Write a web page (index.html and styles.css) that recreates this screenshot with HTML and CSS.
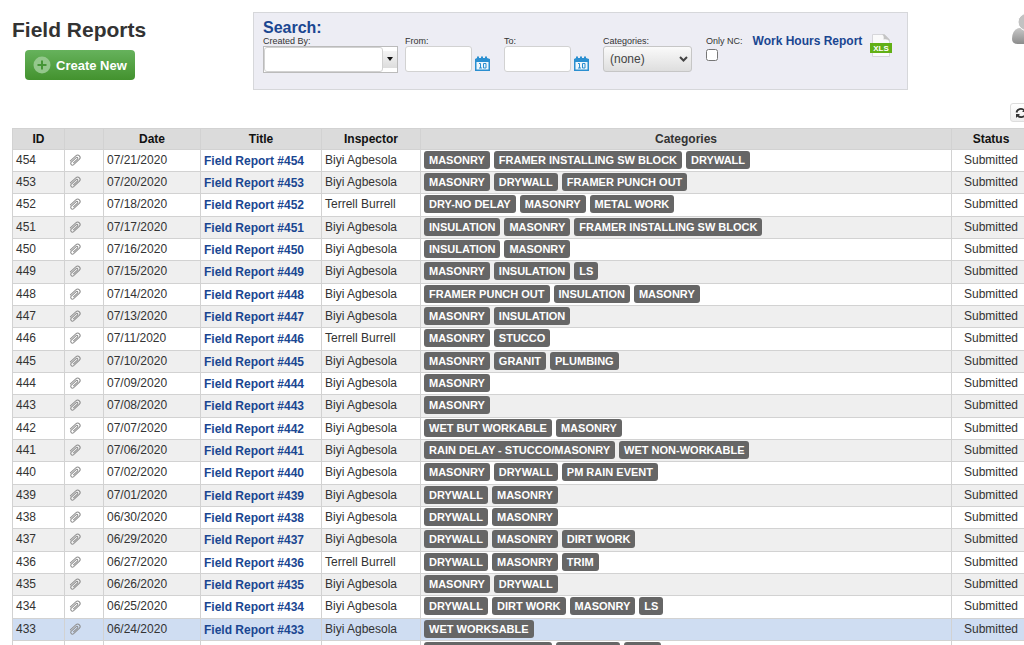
FILE: index.html
```html
<!DOCTYPE html>
<html lang="en">
<head>
  <meta charset="UTF-8" />
  <meta name="viewport" content="width=device-width, initial-scale=1" />
  <title>Field Reports</title>
  <link rel="stylesheet" href="styles.css">
</head>
<body>

  <!-- shared icons -->
  <svg class="sprite" aria-hidden="true">
    <symbol id="clip" viewBox="0 0 14 14">
      <g transform="rotate(-43 7 7)" fill="none" stroke-linecap="round">
        <path d="M3 4.500h7.500a2.500 2.500 0 0 1 0 5H2.500a1.800 1.800 0 0 1 0-3.500H9.500a1 1 0 0 1 0 2H4" stroke="#8c8c8c" />
        <path d="M3 5.200h7" stroke="#c9c9c9" stroke-width=".6" />
      </g>
    </symbol>
    <symbol id="calendar" viewBox="0 0 15 15">
      <path d="M0 3l2-1V1l1-1 1 1v1h2V1l1-1 1 1v1h2V1l1-1 1 1v1l3 1v12H0z" fill="#2b8fd0" />
      <path d="M1.500 6h12v7.500h-12z" fill="#eef6fc" />
      <path d="M4 7.500h1.500v4.500M4 12h3M8.500 7.500h2.500v4.500H8.500z" fill="none" stroke="#2b8fd0" />
    </symbol>
  </svg>

  <div class="page">
    <header class="top">
      <div class="heading">
        <h1>Field Reports</h1>
        <button type="button" class="create">
          <svg width="18" height="18" viewBox="0 0 18 18" aria-hidden="true">
            <circle cx="9" cy="9" r="8.500" fill="#94c78c" />
            <path d="M9 4.500v9M4.500 9h9" stroke="#459536" stroke-width="2" />
          </svg>
          Create New
        </button>
      </div>

      <form class="search">
        <h2>Search:</h2>
        <div class="fields">
          <div class="field">
            <label for="createdBy">Created By:</label>
            <div class="combo">
              <input type="text" id="createdBy" />
              <button type="button" aria-label="Show users">
                <svg width="8" height="5" viewBox="0 0 8 5"><path d="M1 0h6L4 4z" fill="#111" /></svg>
              </button>
            </div>
          </div>
          <div class="field">
            <label for="from">From:</label>
            <div class="date">
              <input type="text" id="from" />
              <button type="button" aria-label="Pick from date"><svg width="15" height="15"><use href="#calendar" /></svg></button>
            </div>
          </div>
          <div class="field">
            <label for="to">To:</label>
            <div class="date">
              <input type="text" id="to" />
              <button type="button" aria-label="Pick to date"><svg width="15" height="15"><use href="#calendar" /></svg></button>
            </div>
          </div>
          <div class="field">
            <label for="categories">Categories:</label>
            <div class="select">
              <select id="categories"><option>(none)</option></select>
              <svg width="9" height="6" viewBox="0 0 9 6" aria-hidden="true"><path d="M1 1l3.500 3.500L8 1" fill="none" stroke="#444" stroke-width="2" /></svg>
            </div>
          </div>
          <div class="field">
            <label for="onlyNc">Only NC:</label>
            <input type="checkbox" id="onlyNc" />
          </div>
          <a href="#" class="hours">Work Hours Report</a>
          <a href="#" class="xls" aria-label="Export to XLS">
            <svg width="22" height="23" viewBox="0 0 22 23">
              <path d="M2.500.5h12l5 5v17h-17z" fill="#fafafa" stroke="#d6d6da" />
              <path d="M12 .5h2.500l5 5V8c-1-3-4-3-6-2.500.5-2 .5-4-1.500-5z" fill="#c4c4c4" />
              <path d="M0 9h22v10H0z" fill="#62b015" />
              <text x="11" y="17" text-anchor="middle">XLS</text>
            </svg>
          </a>
        </div>
      </form>

      <a href="#" class="user" aria-label="Account">
        <svg width="32" height="36" viewBox="0 0 32 36">
          <defs>
            <linearGradient id="gray" x1="0" y1="0" x2="0" y2="1">
              <stop offset="0" stop-color="#c8c8c8" />
              <stop offset="1" stop-color="#8c8c8c" />
            </linearGradient>
          </defs>
          <path d="M7 15h18q7 3 7 10 0 6-6 6H6q-6 0-6-5 0-9 7-11z" fill="url(#gray)" />
          <ellipse cx="16" cy="9" rx="10" ry="9" fill="#c2c2c2" stroke="#fff" />
        </svg>
      </a>
    </header>

    <div class="tools">
      <button type="button" aria-label="Refresh">
        <svg width="12" height="12" viewBox="0 0 12 12">
          <path d="M1.500 5.500C2 2 6.500.5 9.500 3.500M10.500 6.500c-.5 3.500-5 5-8 2" fill="none" stroke="#333" stroke-width="1.800" />
          <path d="M11 1v4H7zM1 11V7h4z" fill="#333" />
        </svg>
      </button>
    </div>

    <table class="reports">
      <colgroup>
        <col class="c-id"><col class="c-clip"><col class="c-date"><col class="c-title">
        <col class="c-inspector"><col><col class="c-status">
      </colgroup>
      <thead>
        <tr><th>ID</th><th></th><th>Date</th><th>Title</th><th>Inspector</th><th class="cats">Categories</th><th>Status</th></tr>
      </thead>
      <tbody id="rows"></tbody>
    </table>
  </div>

  <script src="reports.js"></script>
</body>
</html>
```
FILE: styles.css
```css
body {
  margin: 0;
  overflow: hidden;
  background: #fff;
  color: #333;
  font-family: "Liberation Sans", Arial, sans-serif;
  font-size: 12px;
}
/* the list is slightly wider than the window */
.page {
  box-sizing: border-box;
  width: calc(100% + 19px);
  padding: 12px 12px 0;
}
.sprite {
  display: none;
}
h1, h2 {
  margin: 0;
}
svg {
  display: block;
}
button {
  font-family: inherit;
  padding: 0;
  border: none;
  cursor: pointer;
}
a {
  color: #1a4691;
  font-weight: bold;
  text-decoration: none;
}
.top {
  display: flex;
  align-items: flex-start;
}
.heading {
  width: 241px;
}
h1 {
  padding-top: 6px;
  font-size: 21px;
  line-height: 24px;
}
.create {
  display: flex;
  align-items: center;
  gap: 5px;
  height: 30px;
  margin: 8px 0 0 13px;
  padding: 0 8px;
  border-radius: 4px;
  background: linear-gradient(#66b25c, #43922e);
  color: #fff;
  font-size: 13px;
  font-weight: bold;
}
.search {
  box-sizing: border-box;
  height: 78px;
  padding: 6px 15px 0 9px;
  border: 1px solid #d6d7da;
  background: #ededf4;
}
h2 {
  color: #1a4691;
  font-size: 16px;
  line-height: 18px;
}
.fields {
  display: flex;
  align-items: flex-start;
}
.field {
  margin-right: 7px;
}
.field label {
  display: block;
  font-size: 9px;
  line-height: 9px;
}
.search input[type="text"] {
  box-sizing: border-box;
  height: 26px;
  border: 1px solid #d2d2d2;
  border-radius: 3px;
  background: #fff;
}
.combo {
  display: flex;
  align-items: center;
  box-sizing: border-box;
  width: 135px;
  height: 27px;
  border: 1px solid #bbb;
  background: #fff;
}
.combo input[type="text"] {
  flex: 1;
  min-width: 0;
  height: 25px;
}
.combo button {
  display: flex;
  align-items: center;
  justify-content: center;
  width: 14px;
  height: 17px;
  background: linear-gradient(#f4f4f4, #ddd);
}
.date {
  display: flex;
  align-items: flex-end;
  gap: 3px;
  margin-right: 7px;
}
.date input {
  width: 67px;
}
.date button {
  padding-bottom: 1px;
  background: none;
}
.select {
  position: relative;
  margin-right: 7px;
}
.select select {
  appearance: none;
  width: 89px;
  height: 26px;
  padding: 0 6px;
  border: 1px solid #c6c6c6;
  border-radius: 3px;
  background: linear-gradient(#fafafa, #dedede);
  color: #444;
  font-family: inherit;
  font-size: 12px;
}
.select svg {
  position: absolute;
  top: 10px;
  right: 4px;
  pointer-events: none;
}
.field input[type="checkbox"] {
  display: block;
  width: 12px;
  height: 12px;
  margin: 3px 0 0;
}
.hours {
  margin: 0 8px 0 3px;
  line-height: 8px;
}
.xls {
  margin-top: -3px;
}
.xls text {
  fill: #fff;
  font-size: 8px;
  font-weight: bold;
}
.user {
  margin: 1px -13px 0 auto;
}
.tools {
  display: flex;
  justify-content: flex-end;
  padding: 13px 0 6px;
}
.tools button {
  display: flex;
  align-items: center;
  justify-content: center;
  width: 21px;
  height: 19px;
  border: 1px solid #ddd;
  border-radius: 3px;
  background: linear-gradient(#fff, #eee);
}
.reports {
  width: 100%;
  border-collapse: collapse;
  table-layout: fixed;
}
.c-id { width: 52px; }
.c-clip { width: 39px; }
.c-date { width: 97px; }
.c-title { width: 121px; }
.c-inspector { width: 99px; }
.c-status { width: 79px; }
th, td {
  box-sizing: border-box;
  height: 22px;
  padding: 0 3px;
  border: 1px solid #d2d2d2;
  line-height: 14px;
  white-space: nowrap;
}
th {
  height: 21px;
  background: #dbdbdb;
  color: #111;
}
th.cats {
  color: #333;
}
td {
  padding-bottom: 2px;
}
tbody tr:nth-child(3n) td {
  height: 23px;
}
tbody tr:nth-child(even) {
  background: #efefef;
}
tbody tr.active {
  background: #cfddf2;
}
td:last-child {
  text-align: center;
}
td a {
  display: block;
  padding-top: 2px;
  line-height: 14px;
}
.tags {
  display: flex;
  gap: 4px;
}
.tag {
  padding: 0 5px;
  border-radius: 3px;
  background: #666;
  color: #fff;
  font-size: 11px;
  font-weight: bold;
  line-height: 18px;
}
```
FILE: reports.js
```js
const T = 'Terrell Burrell';
const B = 'Biyi Agbesola';

const reports = [
  [454, '07/21/2020', B, ['MASONRY', 'FRAMER INSTALLING SW BLOCK', 'DRYWALL']],
  [453, '07/20/2020', B, ['MASONRY', 'DRYWALL', 'FRAMER PUNCH OUT']],
  [452, '07/18/2020', T, ['DRY-NO DELAY', 'MASONRY', 'METAL WORK']],
  [451, '07/17/2020', B, ['INSULATION', 'MASONRY', 'FRAMER INSTALLING SW BLOCK']],
  [450, '07/16/2020', B, ['INSULATION', 'MASONRY']],
  [449, '07/15/2020', B, ['MASONRY', 'INSULATION', 'LS']],
  [448, '07/14/2020', B, ['FRAMER PUNCH OUT', 'INSULATION', 'MASONRY']],
  [447, '07/13/2020', B, ['MASONRY', 'INSULATION']],
  [446, '07/11/2020', T, ['MASONRY', 'STUCCO']],
  [445, '07/10/2020', B, ['MASONRY', 'GRANIT', 'PLUMBING']],
  [444, '07/09/2020', B, ['MASONRY']],
  [443, '07/08/2020', B, ['MASONRY']],
  [442, '07/07/2020', B, ['WET BUT WORKABLE', 'MASONRY']],
  [441, '07/06/2020', B, ['RAIN DELAY - STUCCO/MASONRY', 'WET NON-WORKABLE']],
  [440, '07/02/2020', B, ['MASONRY', 'DRYWALL', 'PM RAIN EVENT']],
  [439, '07/01/2020', B, ['DRYWALL', 'MASONRY']],
  [438, '06/30/2020', B, ['DRYWALL', 'MASONRY']],
  [437, '06/29/2020', B, ['DRYWALL', 'MASONRY', 'DIRT WORK']],
  [436, '06/27/2020', T, ['DRYWALL', 'MASONRY', 'TRIM']],
  [435, '06/26/2020', B, ['MASONRY', 'DRYWALL']],
  [434, '06/25/2020', B, ['DRYWALL', 'DIRT WORK', 'MASONRY', 'LS']],
  [433, '06/24/2020', B, ['WET WORKSABLE']],
  [432, '06/23/2020', B, ['WET BUT WORKABLE', 'DRYWALL', 'TRIM']]
];

document.getElementById('rows').innerHTML = reports.map(([id, date, inspector, tags]) => `
  <tr class="${id === 433 ? 'active' : ''}">
    <td>${id}</td>
    <td><svg width="14" height="14"><use href="#clip" /></svg></td>
    <td>${date}</td>
    <td><a href="#">Field Report #${id}</a></td>
    <td>${inspector}</td>
    <td><div class="tags">${tags.map(t => `<span class="tag">${t}</span>`).join('')}</div></td>
    <td>Submitted</td>
  </tr>`).join('');
```
